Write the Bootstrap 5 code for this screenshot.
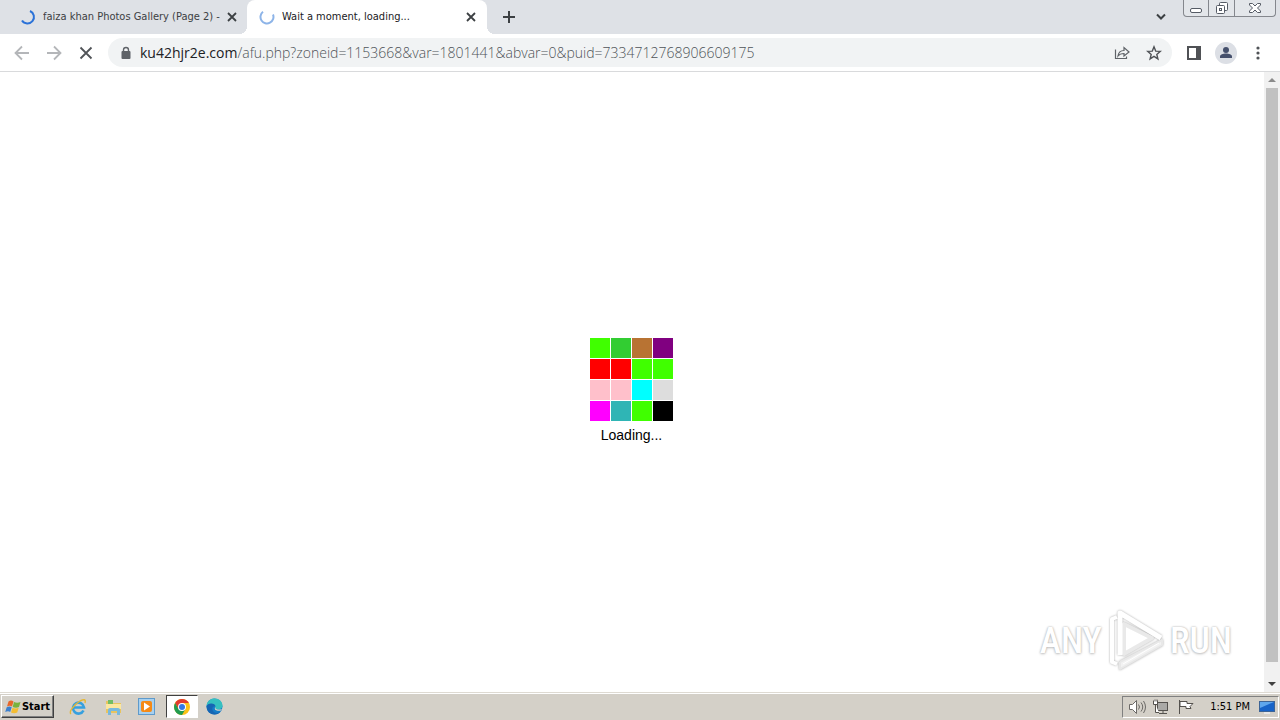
<!DOCTYPE html>
<html lang="en">
<head>
<meta charset="utf-8">
<meta name="viewport" content="width=device-width, initial-scale=1">
<title>Wait a moment, loading...</title>
<link rel="stylesheet" href="https://cdn.jsdelivr.net/npm/bootstrap@5.3.0/dist/css/bootstrap.min.css">
<style>
  body { font-family: "DejaVu Sans Condensed", "Noto Sans", sans-serif; font-size: 11px; line-height: 16px; color: #202124; background: #fff; }
  button { border: 0; padding: 0; background: transparent; color: inherit; display: flex; align-items: center; justify-content: center; flex: none; }
  svg { display: block; flex: none; }
  .tabstrip { height: 34px; background: #dee1e6; }
  .browser-tab { width: 240px; padding: 0 8px 0 20px; color: #3c4043; }
  .browser-tab:first-child { width: 247px; padding-right: 7px; }
  .browser-tab a { color: inherit; margin-left: 7px; }
  .browser-tab.current { background: #fff; color: #202124; border-radius: 8px 8px 0 0; padding-left: 12px; position: relative; }
  .browser-tab.current::before, .browser-tab.current::after { content: ""; position: absolute; bottom: 0; width: 8px; height: 8px; }
  .browser-tab.current::before { left: -8px; background: radial-gradient(circle at 0 0, transparent 8px, #fff 8px); }
  .browser-tab.current::after { right: -8px; background: radial-gradient(circle at 100% 0, transparent 8px, #fff 8px); }
  .tab-close { width: 16px; height: 34px; }
  .new-tab { width: 28px; margin-left: 8px; }
  .window-buttons { height: 17px; margin-right: 4px; border: 1px solid #84878d; border-top: 0; border-radius: 0 0 4px 4px; background: #e3e6ea; }
  .window-buttons button + button { border-left: 1px solid #84878d; }
  .win-min { width: 24px; }
  .win-restore { width: 26px; }
  .win-close { width: 41px; }
  .toolbar { height: 38px; padding: 0 6px; border-bottom: 1px solid #d9dadc; }
  .tool { width: 32px; height: 32px; color: #5f6368; }
  .omnibox { height: 29px; border-radius: 15px; background: #f1f3f4; padding: 0 2px 0 12px; margin: 0 6px; }
  .address { font-family: "Open Sans", "Noto Sans", sans-serif; font-weight: 300; font-size: 14px; line-height: 20px; color: #4f5358; }
  .address b { font-weight: 400; color: #202124; }
  .tiles { display: grid; grid-template-columns: repeat(4, 20px); grid-auto-rows: 20px; gap: 1px; }
  .loader { padding: 16px 1px 0 0; }
  .loading-text { font-family: "Liberation Sans", sans-serif; font-size: 14px; line-height: 16px; color: #000; margin-top: 6px; }
  .scroll-rail { width: 16px; background: #f1f1f1; }
  .scroll-thumb { background: #c1c1c1; margin: 0 2px 14px; }
  .rail-button { height: 16px; width: 16px; }
  .watermark { position: absolute; right: 48px; bottom: 17px; font-family: "Roboto Condensed", "Open Sans Condensed", Roboto, sans-serif; font-size: 36px; font-weight: 500; line-height: 40px; color: #fff; text-shadow: 0 0 2px #aaa, 0 1px 3px #ccc; gap: 4px; }
  .taskbar { height: 28px; background: #d4d0c8; border-top: 1px solid #dedad2; box-shadow: inset 0 1px #fff; padding: 2px 1px 2px; color: #000; }
  .raised { border: 1px solid; border-color: #fff #404040 #404040 #fff; box-shadow: inset -1px -1px #808080; }
  .sunken { border: 1px solid; border-color: #404040 #fff #fff #404040; background: #fff; }
  .start { width: 53px; height: 23px; font-weight: 700; font-size: 11px; gap: 1px; }
  .task { width: 32px; height: 23px; }
  .tray { height: 22px; border: 1px solid; border-color: #808080 #fff #fff #808080; padding: 0 2px 0 5px; }
</style>
</head>
<body>
<div class="d-flex flex-column vh-100 overflow-hidden">
  <header>
    <div class="tabstrip d-flex align-items-start">
      <nav class="d-flex align-self-stretch" aria-label="Tabs">
        <div class="browser-tab d-flex align-items-center">
          <svg width="16" height="16" fill="none" stroke="#2b72d8" stroke-width="2"><path d="M10 2a6.500 6.500 0 1 1-8 9.500"/></svg>
          <a href="#" class="text-decoration-none text-nowrap overflow-hidden flex-grow-1">faiza khan Photos Gallery (Page 2) -</a>
          <button class="tab-close" aria-label="Close tab"><svg width="10" height="10" stroke="#3c4043" stroke-width="1.8"><path d="m1 1 8 8m0-8-8 8"/></svg></button>
        </div>
        <div class="browser-tab current d-flex align-items-center">
          <svg width="16" height="16" fill="none" stroke="#8db4e8" stroke-width="2"><path d="M14 5.500A6.500 6.500 0 1 1 4 2.800"/></svg>
          <a href="#" class="text-decoration-none text-nowrap overflow-hidden flex-grow-1">Wait a moment, loading...</a>
          <button class="tab-close" aria-label="Close tab"><svg width="10" height="10" stroke="#3c4043" stroke-width="1.8"><path d="m1 1 8 8m0-8-8 8"/></svg></button>
        </div>
      </nav>
      <button class="new-tab h-100" aria-label="New tab"><svg width="12" height="12" stroke="#3c4043" stroke-width="2"><path d="M6 0v12M0 6h12"/></svg></button>
      <button class="h-100 ms-auto me-3" aria-label="Search tabs"><svg width="12" height="8" fill="none" stroke="#3c4043" stroke-width="2"><path d="m2 1.5 4 4 4-4"/></svg></button>
      <div class="window-buttons d-flex">
        <button class="win-min" aria-label="Minimize"><svg width="14" height="16" fill="#fff" stroke="#555b65"><rect x="1.5" y="8.500" width="11" height="4" rx="1.500"/></svg></button>
        <button class="win-restore" aria-label="Restore"><svg width="14" height="16" fill="#fff" stroke="#555b65"><rect x="4.500" y="2.500" width="8" height="8" rx="1"/><rect x="1.500" y="5.500" width="8" height="8" rx="1"/><rect x="4.500" y="8.500" width="2" height="2"/></svg></button>
        <button class="win-close" aria-label="Close"><svg width="14" height="16" fill="#fff" stroke="#555b65"><path d="M1.500 3.500h3L7 6l2.500-2.500h3V5L9.500 8l3 3v1.500h-3L7 10l-2.500 2.500h-3V11l3-3-3-3z"/></svg></button>
      </div>
    </div>
    <div class="toolbar d-flex align-items-center">
      <button class="tool" aria-label="Back"><svg width="16" height="16" fill="none" stroke="#b4b6b9" stroke-width="1.800"><path d="M15 8H2M8 1.500 1.500 8 8 14.500"/></svg></button>
      <button class="tool" aria-label="Forward"><svg width="16" height="16" fill="none" stroke="#b4b6b9" stroke-width="1.800"><path d="M1 8h13M8 1.500 14.500 8 8 14.500"/></svg></button>
      <button class="tool" aria-label="Stop"><svg width="14" height="14" stroke="#505357" stroke-width="1.800"><path d="m1.500 1.500 11 11m0-11-11 11"/></svg></button>
      <div class="omnibox d-flex align-items-center flex-grow-1 overflow-hidden">
        <svg width="12" height="14" fill="#5f6368"><rect x="1.500" y="5" width="9" height="8" rx="1"/><path d="M3.500 6V4a2.500 2.500 0 0 1 5 0v2" fill="none" stroke="#5f6368" stroke-width="1.400"/></svg>
        <div class="address text-nowrap flex-grow-1 overflow-hidden ms-2" role="textbox" aria-label="Address"><b>ku42hjr2e.com</b>/afu.php?zoneid=1153668&amp;var=1801441&amp;abvar=0&amp;puid=7334712768906609175</div>
        <button class="tool" aria-label="Share"><svg width="16" height="16" fill="none" stroke="#5f6368" stroke-width="1.200"><path d="M1.500 4.500v9h11v-2M4 11c.5-4 3-5.500 6-5.500V2.500l5 4.500-5 4V8.500C7.500 8.500 5.500 9 4 11z"/></svg></button>
        <button class="tool" aria-label="Bookmark"><svg width="16" height="16" fill="none" stroke="#505357" stroke-width="1.400"><path d="m8 1.800 1.700 4.300 4.600.3-3.500 3 1.100 4.500L8 11.400l-3.900 2.500 1.100-4.500-3.500-3 4.600-.3z"/></svg></button>
      </div>
      <button class="tool" aria-label="Side panel"><svg width="14" height="14"><rect x="1" y="1" width="12" height="12" fill="#fff" stroke="#4f5155" stroke-width="2"/><path d="M9 1h4v12H9z" fill="#4f5155"/></svg></button>
      <button class="tool" aria-label="Profile"><svg width="22" height="22" fill="#45506c"><circle cx="11" cy="11" r="11" fill="#dcdfe5"/><circle cx="11" cy="8" r="3"/><path d="M5 16v-1.500c0-2 3-3 6-3s6 1 6 3V16z"/></svg></button>
      <button class="tool" aria-label="Menu"><svg width="4" height="14" fill="#505357"><circle cx="2" cy="2" r="1.600"/><circle cx="2" cy="7" r="1.600"/><circle cx="2" cy="12" r="1.600"/></svg></button>
    </div>
  </header>

  <div class="d-flex flex-grow-1 position-relative">
    <main class="loader flex-grow-1 d-flex flex-column align-items-center justify-content-center">
      <div class="tiles" aria-hidden="true">
        <i style="background:#40ff00"></i><i style="background:#32cd32"></i><i style="background:#b87333"></i><i style="background:#800080"></i>
        <i style="background:#ff0000"></i><i style="background:#ff0000"></i><i style="background:#40ff00"></i><i style="background:#40ff00"></i>
        <i style="background:#ffc0cb"></i><i style="background:#ffc0cb"></i><i style="background:#00ffff"></i><i style="background:#dddddd"></i>
        <i style="background:#ff00ff"></i><i style="background:#2fb5b5"></i><i style="background:#40ff00"></i><i style="background:#000000"></i>
      </div>
      <div class="loading-text">Loading...</div>
    </main>
    <div class="scroll-rail d-flex flex-column" aria-hidden="true">
      <div class="rail-button d-flex align-items-center justify-content-center"><svg width="8" height="4" fill="#8b8b8b"><path d="m0 4 4-4 4 4z"/></svg></div>
      <div class="scroll-thumb flex-grow-1"></div>
      <div class="rail-button d-flex align-items-center justify-content-center"><svg width="8" height="4" fill="#404040"><path d="m0 0 4 4 4-4z"/></svg></div>
    </div>
    <div class="watermark d-flex align-items-center">
      <span>ANY</span>
      <svg width="60" height="68" viewBox="0 0 60 68" fill="none" stroke-linejoin="round" style="filter:drop-shadow(0 0 1px #aaa)">
        <path d="M18 17v30l28-16z" fill="#fff" stroke="#e9e9e9" stroke-width="4"/>
        <path d="M14 48V6l41 25" stroke="#fff" stroke-width="5"/>
        <path d="M11 10l-5 2v43l5 2" stroke="#fff" stroke-width="4"/>
        <path d="M14 55v7l42-24v-5L14 55" fill="#f2f2f2" stroke="#e8e8e8" stroke-width="2"/>
        <path d="m17 57 36-21" stroke="#fff" stroke-width="1"/>
      </svg>
      <span>RUN</span>
    </div>
  </div>

  <footer class="taskbar d-flex align-items-center">
    <button class="start raised"><svg width="16" height="16" viewBox="0 0 16 16"><path d="M3.500 2.500q2.500-2 5 0L7 7.500q-2-1.500-5 0z" fill="#e8672a"/><path d="M9 3q3 1.500 6.500 0L14 8q-3 1.500-6.300 0z" fill="#79b23e"/><path d="M1.700 8.200q3-1.500 5 0L5.200 13q-2-1.500-5 0z" fill="#3c80ce"/><path d="M7.500 8.700q3 1.500 6.200 0L12.200 13.500q-3 1.500-6.200 0z" fill="#f4bd32"/></svg>Start</button>
    <nav class="d-flex align-items-center ms-2" aria-label="Pinned programs">
      <button class="task" aria-label="Internet Explorer"><svg width="18" height="18" viewBox="0 0 18 18" fill="none"><path d="M14.500 12.500A5.500 5.500 0 1 1 15 9.500H5" stroke="#36a0df" stroke-width="2.600"/><path d="M2 16c-3-2 4-10 9-13 4-2 6-2 5 2" stroke="#e5b735" stroke-width="1.400"/></svg></button>
      <button class="task ms-1" aria-label="Explorer"><svg width="18" height="18" viewBox="0 0 18 18"><path d="M1 3h6l1 2h8v10H1z" fill="#e9c45f"/><path d="M3 2h5v5H3z" fill="#72bd65"/><path d="M1 6h15v5H1z" fill="#fbe7a0"/><path d="M3 17v-5q0-2 2-2h8q2 0 2 2v5h-3v-4H6v4z" fill="#78b9de"/></svg></button>
      <button class="task" aria-label="Media Player"><svg width="17" height="17" viewBox="0 0 17 17"><rect x=".5" y=".5" width="16" height="16" fill="#a7d0ef" stroke="#5e9acb"/><rect x="3" y="3" width="11" height="11" rx="2" fill="#f58a16"/><path d="M6 4.500v8l6-4z" fill="#fff"/></svg></button>
      <button class="task sunken ms-1" aria-label="Chrome"><svg width="16" height="16" viewBox="0 0 16 16"><circle cx="8" cy="8" r="8" fill="#fbc116"/><path d="M1.100 4A8 8 0 0 1 14.900 4H8L4.500 10z" fill="#e33b2e"/><path d="M1.100 4A8 8 0 0 0 8 16l3.500-6-3.500 2-3.500-2z" fill="#219b50"/><circle cx="8" cy="8" r="4" fill="#fff"/><circle cx="8" cy="8" r="3" fill="#3478e5"/></svg></button>
      <button class="task" aria-label="Edge"><svg width="17" height="17" viewBox="0 0 17 17"><circle cx="8.500" cy="8.500" r="8" fill="#147cc8"/><path d="M.5 8C1 3 4.500.5 8.500.5c5 0 8 3.500 8 7 0 2.500-2 4-5 4-2 0-3-1-2-2.500C9 6 3 4 .5 8z" fill="#35c0c0"/><path d="M.5 8C3 4 9.500 5 9.500 8.500c-2-1-4 1-3 3.500 1 3 5 4 8 1.500-3 5-14 4-14-5.500z" fill="#1665b3"/><path d="M10 8.500c-2 2 1 4 6 2.500l-1 1.500c-4 1-7-.5-6-3z" fill="#d4d0c8"/></svg></button>
    </nav>
    <div class="tray d-flex align-items-center ms-auto">
      <button aria-label="Volume"><svg width="20" height="16" fill="none" stroke="#6b6966"><path d="M1.500 5.500h3l4-4v13l-4-4h-3z" fill="#fff"/><path d="M10.500 5.500q2 2.500 0 5M13 3.500q3.500 4.500 0 9M15.500 2q4 6 0 12"/></svg></button>
      <button class="ms-1" aria-label="Network"><svg width="18" height="16" fill="#fff" stroke="#55524e"><rect x="5.500" y="3.500" width="10" height="8" fill="#aaa9a6"/><path d="M7 14.500h8M11 12v2M1.500 1.500v4h4v-4M3.500 5.500v8H7M3 .5v2M5 .5v2"/></svg></button>
      <button class="ms-2" aria-label="Action center"><svg width="16" height="16" fill="#fff" stroke="#55524e"><path d="M1.500 1v14M2 2.500h7v2h6l-3 3 1 2H8v-2H2z"/></svg></button>
      <time class="ms-3">1:51 PM</time>
      <button class="ms-2" aria-label="Show desktop"><svg width="18" height="16"><rect x="1.500" y="2.500" width="15" height="10" fill="#1763c8" stroke="#3d6496"/><path d="M2 3h14L2 9z" fill="#5ea6ed"/><path d="M6 13h6v2H6z" fill="#e7e7e7"/></svg></button>
    </div>
  </footer>
</div>
<script src="https://cdn.jsdelivr.net/npm/bootstrap@5.3.0/dist/js/bootstrap.bundle.min.js"></script>
</body>
</html>
